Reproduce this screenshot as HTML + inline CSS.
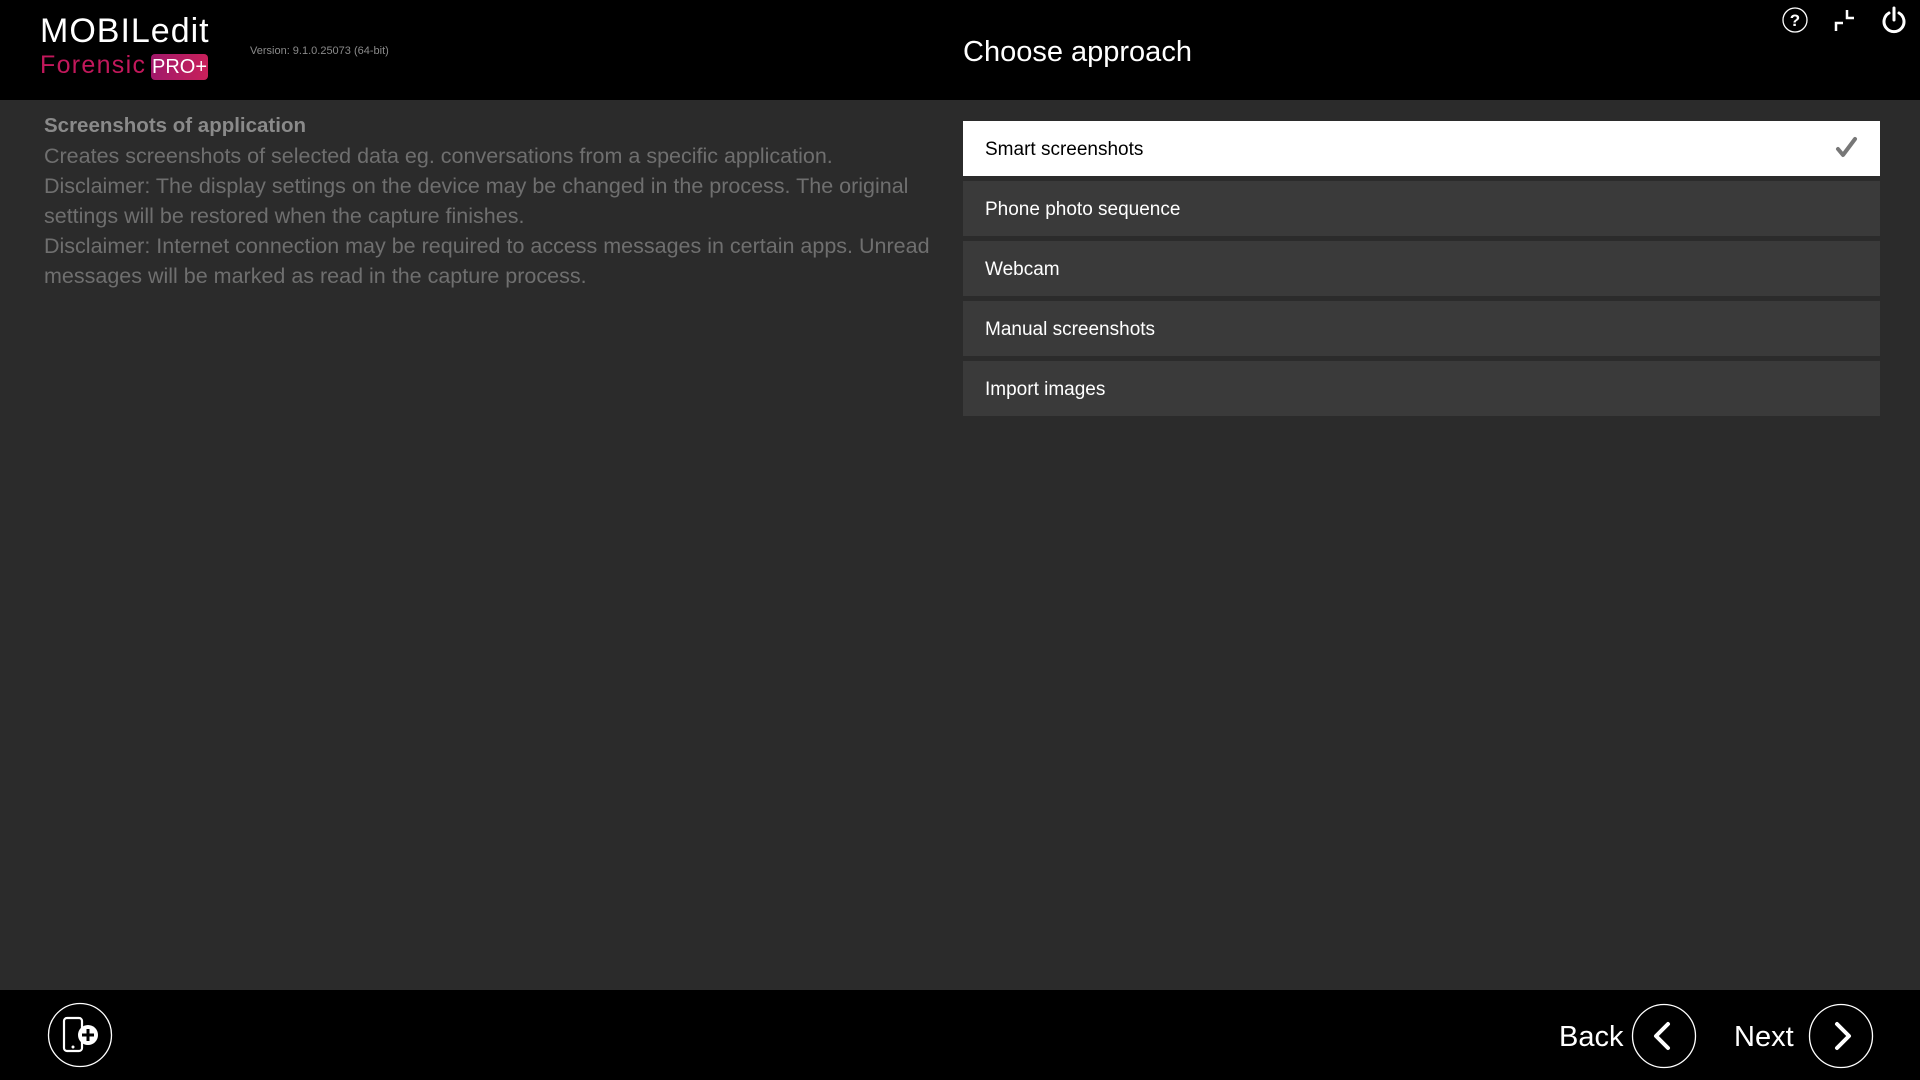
<!DOCTYPE html>
<html><head><meta charset="utf-8"><style>
*{margin:0;padding:0;box-sizing:border-box}
body{width:1920px;height:1080px;background:#2b2b2b;font-family:"Liberation Sans",sans-serif;position:relative;overflow:hidden}
.hdr{position:absolute;left:0;top:0;width:1920px;height:100px;background:#000}
.ftr{position:absolute;left:0;top:990px;width:1920px;height:90px;background:#000}
.abs{position:absolute;white-space:nowrap}
.row{position:absolute;left:963px;width:917px;height:55px;background:#3a3a3a;color:#fff;font-size:19px;line-height:58px;padding-left:22px}
.desc{position:absolute;left:44px;top:110px;color:#6f6f6f;font-size:21.5px;line-height:30px;width:960px}
.desc b{color:#8a8a8a;font-size:20.5px}
</style></head><body>
<div class="hdr"></div>
<div class="abs" style="left:40px;top:12px;color:#fff;font-size:34px;letter-spacing:1px">MOBILedit</div>
<div class="abs" style="left:40px;top:51px;color:#c2185b;font-size:25px;letter-spacing:1.3px">Forensic</div>
<div class="abs" style="left:151px;top:54px;width:57px;height:26px;border-radius:4px;background:linear-gradient(90deg,#a0186a,#c8205a);color:#fff;font-size:20px;line-height:26px;text-align:center">PRO+</div>
<div class="abs" style="left:250px;top:45px;color:#8a8a8a;font-size:11px">Version: 9.1.0.25073 (64-bit)</div>
<div class="abs" style="left:963px;top:36px;color:#fff;font-size:29px">Choose approach</div>
<svg class="abs" style="left:1780px;top:5px" width="140" height="32" viewBox="0 0 140 32">
<circle cx="15" cy="15" r="12" fill="none" stroke="#fff" stroke-width="1.3"/>
<text x="15" y="21" fill="#fff" font-size="17" font-weight="bold" text-anchor="middle" font-family="Liberation Sans">?</text>
<path d="M67 5v8h7M63 18h-7v8" fill="none" stroke="#fff" stroke-width="2.5"/>
<path d="M109 8a10 10 0 1 0 10 0M114 3v12" fill="none" stroke="#fff" stroke-width="3" stroke-linecap="round"/>
</svg>
<div class="desc"><b>Screenshots of application</b><br>Creates screenshots of selected data eg. conversations from a specific application.<br>Disclaimer: The display settings on the device may be changed in the process. The original<br>settings will be restored when the capture finishes.<br>Disclaimer: Internet connection may be required to access messages in certain apps. Unread<br>messages will be marked as read in the capture process.</div>
<div class="row" style="top:121px;background:#fff;color:#000">Smart screenshots
<svg style="position:absolute;right:20px;top:15px" width="26" height="24" viewBox="0 0 26 24"><path d="M4 13l5 6L21 3" fill="none" stroke="#777" stroke-width="4" stroke-linecap="round" stroke-linejoin="round"/></svg></div>
<div class="row" style="top:181px">Phone photo sequence</div>
<div class="row" style="top:241px">Webcam</div>
<div class="row" style="top:301px">Manual screenshots</div>
<div class="row" style="top:361px">Import images</div>
<div class="ftr"></div>
<svg class="abs" style="left:47px;top:1002px" width="66" height="66" viewBox="0 0 66 66">
<circle cx="33" cy="33" r="31.5" fill="none" stroke="#fff" stroke-width="1.3"/>
<rect x="17" y="16" width="18" height="33" rx="3" fill="none" stroke="#fff" stroke-width="2.2"/>
<circle cx="26" cy="45" r="1.5" fill="#fff"/>
<circle cx="41" cy="33" r="10" fill="#fff"/>
<path d="M41 27v12M35 33h12" stroke="#000" stroke-width="3"/>
</svg>
<div class="abs" style="left:1559px;top:1021px;color:#fff;font-size:29px">Back</div>
<svg class="abs" style="left:1631px;top:1003px" width="66" height="66" viewBox="0 0 66 66"><circle cx="33" cy="33" r="31.5" fill="none" stroke="#fff" stroke-width="1.3"/><path d="M37 21L25 33l12 12" fill="none" stroke="#fff" stroke-width="4" stroke-linecap="round" stroke-linejoin="round"/></svg>
<div class="abs" style="left:1734px;top:1021px;color:#fff;font-size:29px">Next</div>
<svg class="abs" style="left:1808px;top:1003px" width="66" height="66" viewBox="0 0 66 66"><circle cx="33" cy="33" r="31.5" fill="none" stroke="#fff" stroke-width="1.3"/><path d="M29 21l12 12-12 12" fill="none" stroke="#fff" stroke-width="4" stroke-linecap="round" stroke-linejoin="round"/></svg>
</body></html>
